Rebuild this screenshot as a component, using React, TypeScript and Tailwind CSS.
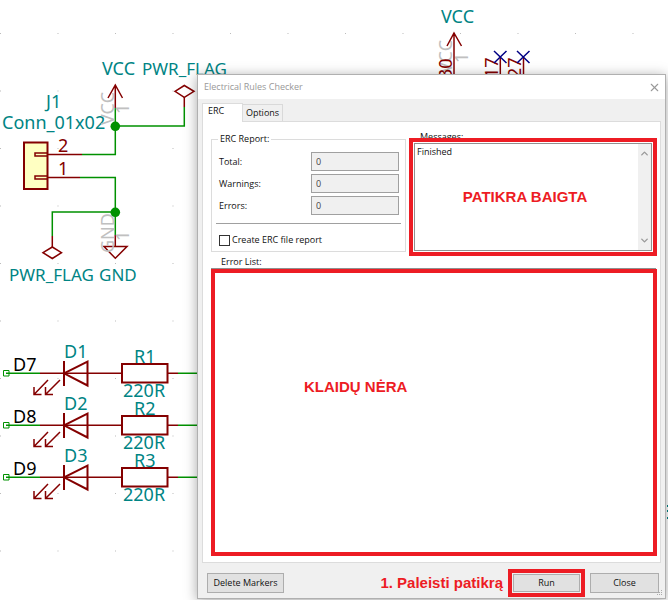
import { useState } from "react"
import { X, ChevronUp, ChevronDown } from "lucide-react"

const TEAL = "#008484"
const RED = "#840000"
const GREEN = "#009100"
const GREY = "#c0c0c0"
const NAVY = "#000084"

const counters = [
    { id: "total", label: "Total:" },
    { id: "warnings", label: "Warnings:" },
    { id: "errors", label: "Errors:" },
]

const ledRows = [
    { net: "D7", led: "D1", resistor: "R1", y: 373 },
    { net: "D8", led: "D2", resistor: "R2", y: 425 },
    { net: "D9", led: "D3", resistor: "R3", y: 477 },
]

function VerticalText({ x, y, fill, children } : { x: number, y: number, fill: string, children: string }) {
    return <text transform={`translate(${x} ${y}) rotate(-90)`} fill={fill}>{children}</text>
}

function LedRow({ net, led, resistor, y } : { net: string, led: string, resistor: string, y: number }) {
    return (
        <g transform={`translate(0 ${y})`}>
            <g fill="none" strokeWidth="1.5">
                <path d="M3.5 -2.5h5.5v5.5h-5.5z" stroke={GREEN} strokeWidth="1" />
                <path d="M6 .3H40M178 .3H240" stroke={GREEN} />
                <path d="M40 .3H122M168 .3H178" stroke={RED} />
                <path d="M64 -12V13M64 .3L87.500 -11.500V12.500Z" stroke={RED} strokeWidth="2" />
                <path d="M48 7L34 21.500M34 14V21.500H41.500M60 7L45.500 21.500M45.500 14V21.500H53" stroke={RED} />
                <rect x="122" y="-9" width="45.500" height="18.500" fill="#fff" stroke={RED} strokeWidth="2" />
            </g>
            <text x="13" y="-2" fill="#000">{net}</text>
            <text x="64" y="-15" fill={TEAL}>{led}</text>
            <text x="134" y="-10" fill={TEAL}>{resistor}</text>
            <text x="123" y="24" fill={TEAL}>220R</text>
        </g>
    )
}

function Schematic() {
    return (
        <svg className="absolute inset-0 h-full w-full font-['Noto_Sans',sans-serif] text-[18px]" aria-hidden="true">
            <defs>
                <pattern id="grid" x="0" y="33" width="57.5" height="57.5" patternUnits="userSpaceOnUse">
                    <rect width="1" height="1" fill="#bbb" />
                </pattern>
            </defs>
            <rect width="100%" height="100%" fill="url(#grid)" />

            {/* connector with its power symbols */}
            <g fill="none" strokeWidth="1.5">
                <rect x="24" y="142.500" width="23.500" height="46.500" fill="#ffffc2" stroke={RED} strokeWidth="2" />
                <path d="M48 153H35V156H48M48 176H35V179H48M48 154.500H82M48 177.500H80" stroke={RED} />
                <path d="M82 154.500H115.300V108M115.300 126H184.300V107M80 177.500H115.300V235M115.300 212H52.300V236" stroke={GREEN} />
                <path d="M115.300 108V86M108 98L115.300 85L122.500 98M184.300 107V97M115.300 235V246.500M52.300 236V247" stroke={RED} />
                <path d="M175 91.300L184.300 85.500L194 91.300L184.300 97.300ZM43 252.700L52.300 247L61.500 252.700L52.300 258.500ZM104 246.500H127L115.300 258.300Z" stroke={RED} />
            </g>
            <text x="102" y="75" fill={TEAL}>VCC</text>
            <text x="142" y="75" fill={TEAL} className="text-[17px]">PWR_FLAG</text>
            <text x="46" y="108" fill={TEAL}>J1</text>
            <text x="2" y="129" fill={TEAL}>Conn_01x02</text>
            <text x="58" y="152" fill={RED}>2</text>
            <text x="58" y="175" fill={RED}>1</text>
            <text x="9" y="281" fill={TEAL} className="text-[17px]">PWR_FLAG</text>
            <text x="99" y="281" fill={TEAL} className="text-[17px]">GND</text>
            <VerticalText x={114} y={125} fill={GREY}>VCC</VerticalText>
            <VerticalText x={129} y={114} fill={GREY}>1</VerticalText>
            <VerticalText x={114} y={253} fill={GREY}>GND</VerticalText>
            <VerticalText x={129} y={241} fill={GREY}>1</VerticalText>
            <circle cx="115.300" cy="126.300" r="4.800" fill={GREEN} />
            <circle cx="115.300" cy="212.300" r="4.800" fill={GREEN} />

            {/* supply pins above the dialog */}
            <text x="441" y="23" fill={TEAL}>VCC</text>
            <VerticalText x={452} y={73} fill={GREY}>VCC</VerticalText>
            <VerticalText x={468} y={63} fill={GREY}>1</VerticalText>
            <VerticalText x={452} y={79} fill={RED}>30</VerticalText>
            <VerticalText x={498} y={78} fill={RED}>17</VerticalText>
            <VerticalText x={521} y={78} fill={RED}>27</VerticalText>
            <g fill="none" strokeWidth="1.5">
                <path d="M454 80V34M447 46L454 33L461.500 46M500.300 57V80M523.500 57V80" stroke={RED} />
                <path d="M494 51L506.500 63M506.500 51L494 63M517 51L529.500 63M529.500 51L517 63" stroke={NAVY} />
            </g>
            <path d="M667 505h1v2h-1zM667 510h1v2h-1zM667 517h1v2h-1z" fill={TEAL} />

            {ledRows.map((row) => <LedRow key={row.net} {...row} />)}
        </svg>
    )
}

export default function App() {
    const [createReport, setCreateReport] = useState(false)

    return (
        <main className="relative flex min-h-screen flex-col overflow-hidden bg-white pt-[74px] pr-[2px] pb-px pl-[197px]">
            <Schematic />

            <section role="dialog" aria-labelledby="title" className="relative flex flex-1 flex-col border border-[#b0b0b0] bg-[#f0f0f0] font-['Open_Sans',sans-serif] text-[9px] leading-3 text-[#111] shadow-[0_2px_12px_rgba(0,0,0,0.35)]">
                <header className="flex h-6 items-center justify-between bg-white pr-1 pl-1.5">
                    <h1 id="title" className="text-[#999]">Electrical Rules Checker</h1>
                    <button type="button" aria-label="Close window" className="text-[#999]"><X size={13} strokeWidth={2} /></button>
                </header>

                <div role="tablist" className="z-10 mt-1 flex items-end pl-1">
                    <button type="button" role="tab" aria-selected="true" className="-mb-px h-[19px] w-[41px] border border-b-0 border-[#dcdcdc] bg-white pb-1 pl-[5px] text-left">ERC</button>
                    <button type="button" role="tab" aria-selected="false" className="h-[17px] w-[40px] border border-b-0 border-l-0 border-[#d9d9d9]">Options</button>
                </div>

                <div role="tabpanel" className="mx-1 flex flex-1 flex-col border border-[#dcdcdc] bg-white pt-2 pr-[3px] pb-1.5 pl-2">
                    <div className="flex gap-[3px]">
                        <fieldset className="mt-[3px] h-[119px] w-[195px] border border-[#dcdcdc] px-1 pt-[7px]">
                            <legend className="ml-0.5 px-0.5">ERC Report:</legend>
                            <div className="flex flex-col gap-[3px] border-b border-[#a0a0a0] pr-0.5 pb-2 pl-[3px]">
                                {counters.map(({ id, label }) => (
                                    <div key={id} className="flex items-center justify-between">
                                        <label htmlFor={id}>{label}</label>
                                        <input id={id} readOnly value="0" className="h-[19px] w-[88px] border border-[#a0a0a0] bg-[#f0f0f0] px-1 text-[#444]" />
                                    </div>
                                ))}
                            </div>
                            <label className="mt-2.5 flex items-center gap-0.5 pl-[3px]">
                                <input type="checkbox" checked={createReport} onChange={(e) => setCreateReport(e.currentTarget.checked)} className="size-[11px] appearance-none border border-[#333] bg-white checked:bg-[#333]" />
                                Create ERC file report
                            </label>
                        </fieldset>

                        <div className="flex flex-1 flex-col">
                            <label htmlFor="messages" className="-mb-[5px] pt-px pl-[11px]">Messages:</label>
                            <div className="relative flex h-[118px] border-4 border-[#ed1c24] bg-white p-px">
                                <textarea id="messages" readOnly value="Finished" className="min-w-0 flex-1 resize-none overflow-hidden border border-r-0 border-[#909090] px-0.5 pt-0.5" />
                                <div className="flex w-[14px] flex-col items-center justify-between border border-l-0 border-[#909090] bg-[#f0f0f0] py-1 text-[#999]">
                                    <ChevronUp size={11} strokeWidth={3} />
                                    <ChevronDown size={11} strokeWidth={3} />
                                </div>
                                <strong className="pointer-events-none absolute inset-x-0 top-[45px] pr-4 text-center font-['Liberation_Sans',sans-serif] text-[15px] leading-5 text-[#ed1c24]">PATIKRA BAIGTA</strong>
                            </div>
                        </div>
                    </div>

                    <h2 className="h-[12px]  pl-2.5">Error List:</h2>
                    <div className="mr-px h-px bg-[#909090]" />
                    <div className="flex-1 border-4 border-[#ed1c24] pt-[104px] pl-[89px]">
                        <strong className="block font-['Liberation_Sans',sans-serif] text-[15px] leading-5 text-[#ed1c24]">KLAIDŲ NĖRA</strong>
                    </div>
                </div>

                <footer className="relative flex h-[35px] items-center gap-[5px] pt-1 pr-1.5 pl-[9px]">
                    <button type="button" className="h-5 w-[77px] border border-[#adadad] bg-[#e1e1e1]">Delete Markers</button>
                    <strong className="ml-auto font-['Liberation_Sans',sans-serif] text-[15px] leading-5 text-[#ed1c24]">1. Paleisti patikrą</strong>
                    <div className="flex border-4 border-[#ed1c24] bg-[#f0f0f0] p-px">
                        <button type="button" className="h-[18px] w-[67px] border border-[#adadad] bg-[#e1e1e1]">Run</button>
                    </div>
                    <button type="button" className="h-5 w-[69px] border border-[#adadad] bg-[#e1e1e1]">Close</button>
                    <svg className="absolute right-0.5 bottom-0.5 size-1.5" viewBox="0 0 6 6" fill="#aaa" aria-hidden="true">
                        <path d="M4 0h1v1h-1zM2 2h1v1h-1zM4 2h1v1h-1zM0 4h1v1h-1zM2 4h1v1h-1zM4 4h1v1h-1z" />
                    </svg>
                </footer>
            </section>
        </main>
    )
}
